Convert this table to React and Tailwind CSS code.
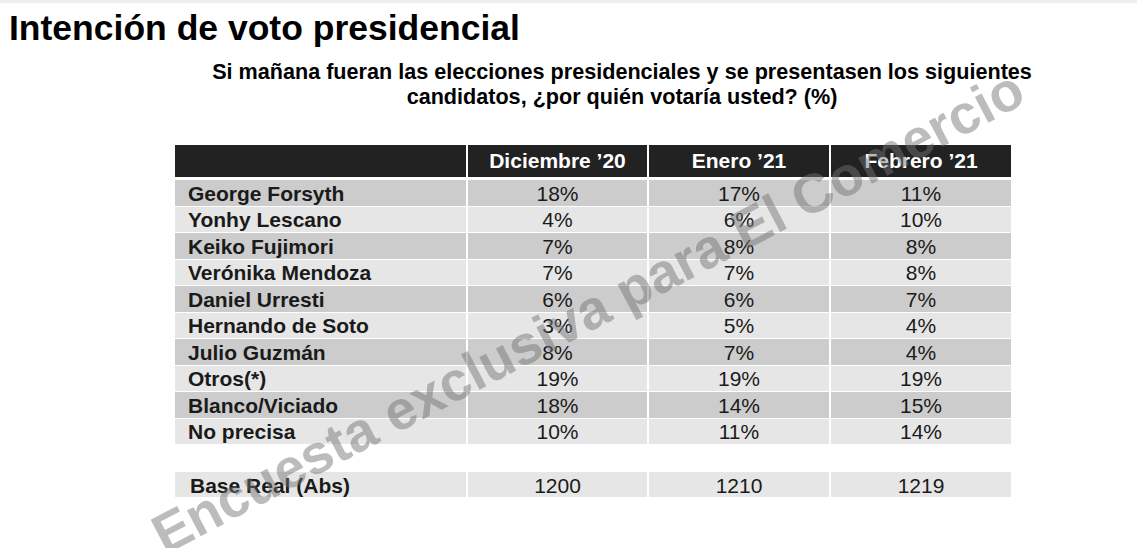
import React from 'react';

const rows = [
  ['George Forsyth', '18%', '17%', '11%'],
  ['Yonhy Lescano', '4%', '6%', '10%'],
  ['Keiko Fujimori', '7%', '8%', '8%'],
  ['Verónika Mendoza', '7%', '7%', '8%'],
  ['Daniel Urresti', '6%', '6%', '7%'],
  ['Hernando de Soto', '3%', '5%', '4%'],
  ['Julio Guzmán', '8%', '7%', '4%'],
  ['Otros(*)', '19%', '19%', '19%'],
  ['Blanco/Viciado', '18%', '14%', '15%'],
  ['No precisa', '10%', '11%', '14%'],
];

const months = ['Diciembre ’20', 'Enero ’21', 'Febrero ’21'];

export default function App() {
  return (
    <div className="relative w-[1137px] h-[548px] overflow-hidden bg-white text-[#1a1a1a]" style={{ fontFamily: '"Liberation Sans", Arial, sans-serif' }}>
      <div className="h-[3px] bg-[#eeeeee]" />
      <h1 className="pt-[8px] pl-[9px] text-[35.5px] leading-[35px] font-bold text-black">Intención de voto presidencial</h1>

      <div className="mt-[13px] pl-[107px] text-center text-[21.6px] leading-[25px] font-bold text-black">
        <div>Si mañana fueran las elecciones presidenciales y se presentasen los siguientes</div>
        <div>candidatos, ¿por quién votaría usted? (%)</div>
      </div>

      <div className="mt-[36px] ml-[175px] w-[836px]">
        <div className="grid grid-cols-[291px_179px_180px_180px] gap-x-[2px] gap-y-px">
          <div className="h-[32px] bg-[#222222]" />
          {months.map(m => (
            <div key={m} className="h-[32px] bg-[#222222] flex items-center justify-center text-white font-bold text-[21px]">{m}</div>
          ))}

          <div className="col-span-4 h-px" />

          {rows.map((r, i) => {
            const bg = i % 2 === 0 ? 'bg-[#cccccc]' : 'bg-[#e6e6e6]';
            return (
              <React.Fragment key={r[0]}>
                <div className={`${bg} h-[25.5px] pl-[13px] pt-px flex items-center font-bold text-[21px] leading-none`}>{r[0]}</div>
                {r.slice(1).map((v, j) => (
                  <div key={j} className={`${bg} h-[25.5px] pt-px flex items-center justify-center text-[21px] leading-none`}>{v}</div>
                ))}
              </React.Fragment>
            );
          })}
        </div>

        <div className="mt-[28px] grid grid-cols-[291px_179px_180px_180px] gap-x-[2px]">
          <div className="h-[25px] bg-[#e6e6e6] pl-[15px] pt-[2px] flex items-center font-bold text-[21px] leading-none">Base Real (Abs)</div>
          {['1200', '1210', '1219'].map(v => (
            <div key={v} className="h-[25px] bg-[#e6e6e6] pt-[2px] flex items-center justify-center text-[21px] leading-none">{v}</div>
          ))}
        </div>
      </div>

      {/* marca de agua */}
      <div className="pointer-events-none absolute left-[588px] top-[312px] -translate-x-1/2 -translate-y-1/2 -rotate-[27.7deg] whitespace-nowrap text-[55px] leading-none font-bold text-[rgba(115,115,115,0.48)]">
        Encuesta exclusiva para El Comercio
      </div>
    </div>
  );
}
